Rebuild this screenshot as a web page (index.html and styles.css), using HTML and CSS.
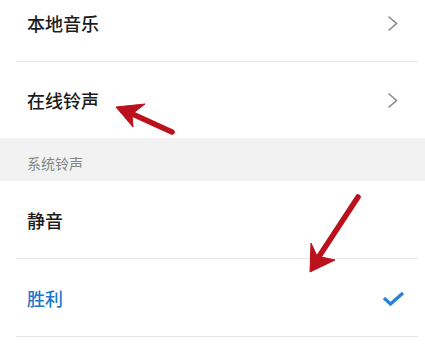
FILE: index.html
```html
<!DOCTYPE html>
<html lang="zh">
<head>
<meta charset="utf-8">
<link rel="stylesheet" href="styles.css">
</head>
<body>
<div class="page">
  <div class="list">
    <div class="row divided">
      <span class="label">本地音乐</span>
      <svg class="chev" width="11" height="17" viewBox="0 0 11 17"><polyline points="1.5,1.5 9.5,8.5 1.5,15.5" fill="none" stroke="#8a8a8a" stroke-width="1.6"/></svg>
    </div>
    <div class="row">
      <span class="label">在线铃声</span>
      <svg class="chev" width="11" height="17" viewBox="0 0 11 17"><polyline points="1.5,1.5 9.5,8.5 1.5,15.5" fill="none" stroke="#8a8a8a" stroke-width="1.6"/></svg>
    </div>
    <div class="section">系统铃声</div>
    <div class="row divided tall">
      <span class="label">静音</span>
    </div>
    <div class="row divided tall check-row">
      <span class="label selected">胜利</span>
      <svg class="check" width="23" height="16" viewBox="0 0 23 16"><polyline points="2,7 8.5,13 21,2" fill="none" stroke="#2a82d6" stroke-width="3.4" stroke-linejoin="miter" stroke-linecap="butt"/></svg>
    </div>
  </div>
  <svg class="annot" width="425" height="344" viewBox="0 0 425 344">
    <g fill="#bb111c" stroke="#bb111c">
      <line x1="172" y1="132" x2="128" y2="112" stroke-width="5.5" stroke-linecap="round"/>
      <polygon points="116,107 145,104 132,114 133,127" stroke-width="1" stroke-linejoin="round"/>
      <line x1="358" y1="197" x2="318" y2="258" stroke-width="5.5" stroke-linecap="round"/>
      <polygon points="310,272 311,243 317,256 335,260" stroke-width="1" stroke-linejoin="round"/>
    </g>
  </svg>
</div>
</body>
</html>
```

FILE: styles.css
```css
html, body {
  margin: 0;
  padding: 0;
  background: #ffffff;
}
.page {
  position: relative;
  width: 425px;
  height: 344px;
  overflow: hidden;
  font-family: "Noto Sans CJK SC", "Noto Sans", sans-serif;
}
.list {
  margin-top: -15px;
  display: flex;
  flex-direction: column;
}
.row {
  height: 76px;
  margin: 0 7px 0 16px;
  padding: 0 20px 0 11px;
  display: flex;
  align-items: center;
  justify-content: space-between;
}
.row.tall {
  height: 77px;
}
.row.divided {
  border-bottom: 1px solid #e6e6e6;
}
.check-row {
  padding-right: 13px;
}
.label {
  font-size: 18px;
  font-weight: 500;
  color: #1c1c1c;
  line-height: 1;
}
.label.selected {
  color: #1e78cc;
}
.chev {
  display: block;
}
.check {
  display: block;
  margin-top: 2px;
}
.section {
  height: 43px;
  box-sizing: border-box;
  background: #f2f2f2;
  padding: 6px 0 0 27px;
  display: flex;
  align-items: center;
  font-size: 14px;
  color: #858585;
}
.annot {
  position: absolute;
  left: 0;
  top: 0;
  pointer-events: none;
}
```
